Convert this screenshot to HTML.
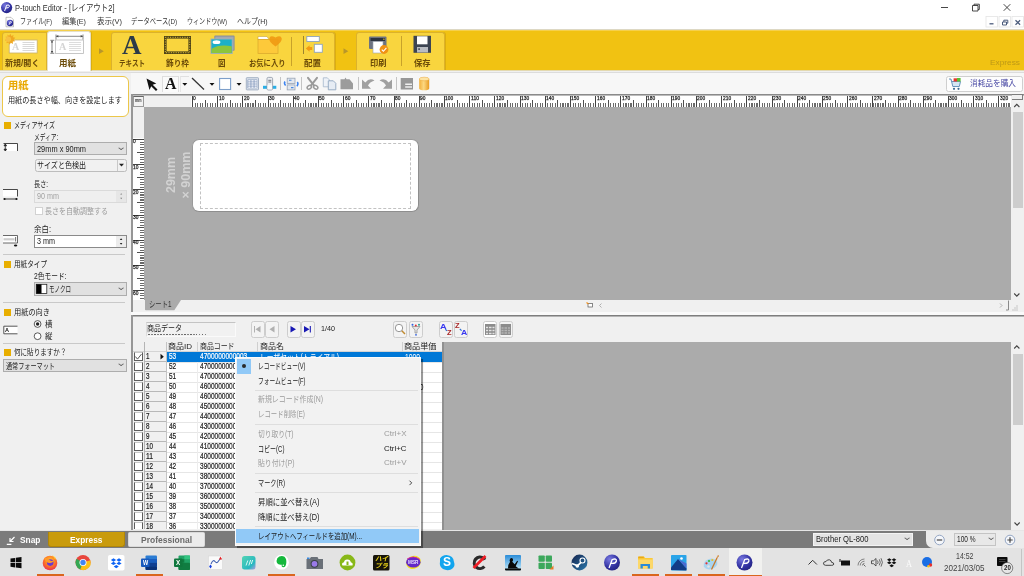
<!DOCTYPE html>
<html lang="ja"><head><meta charset="utf-8"><title>P-touch Editor - [レイアウト2]</title>
<style>
*{box-sizing:border-box;margin:0;padding:0}
html,body{width:1024px;height:576px;overflow:hidden;background:#f0f0f0}
body{position:relative;font-family:"Liberation Sans","Noto Sans CJK JP",sans-serif;font-size:8px;color:#222}
.a{position:absolute}
.t{position:absolute;white-space:nowrap;transform-origin:0 50%;display:block}
svg{position:absolute;overflow:visible}
.tl{position:absolute;left:0;top:0;width:1024px;height:576px;will-change:transform;pointer-events:none}
#title{left:0;top:0;width:1024px;height:29px;background:#fff}
#ribbon{left:0;top:29px;width:1024px;height:42px;background:linear-gradient(#f5d04c 0,#f5d04c 1px,#f1c212 1.500px);border-top:1px solid #ddd8c4;border-bottom:1px solid #e3d9b0}
.grp{position:absolute;top:32px;height:38px;background:#f9d53e;border:1px solid #dcb22c;border-bottom:none;border-radius:3px 3px 0 0;box-shadow:1px 0 0 rgba(170,130,10,.3)}
.rsep{position:absolute;width:1px;background:#c8a22a}
#tool{left:131px;top:72px;width:893px;height:22px;background:#f7f7f7;border-top:1px solid #dcdcdc}
.tsep{position:absolute;top:77px;width:1px;height:13px;background:#c4c4c4}
#left{left:0;top:71px;width:131px;height:459px;background:#f0f0f0}
.sq{position:absolute;left:4px;width:6.5px;height:7px;background:#e8ae00}
.combo{position:absolute;background:#e1e1e1;border:1px solid #adadad}
.hr{position:absolute;left:3px;width:122px;height:1px;background:#c9c9c9}
.chev{position:absolute;width:4.200px;height:4.200px;border-right:1px solid #606060;border-bottom:1px solid #606060;transform:scaleY(.72) rotate(45deg)}
#edit{left:131px;top:94px;width:893px;height:218px;background:linear-gradient(#8a8a8a 0,#8a8a8a 1px,#bcbcbc 1px,#bcbcbc 2px,#f0f0f0 2px);border-left:2px solid #969696}
#canvas{left:144px;top:107px;width:867px;height:192.5px;background:#ababab}
#hrul{left:144px;top:96px;width:867px;height:11px;background:#f0f0f0}
#vrul{left:133px;top:107px;width:11px;height:193px;background:#f0f0f0}
#label{left:192px;top:138.600px;width:227px;height:73px;background:#fff;border:1px solid #9a9a9a;border-right:1.600px solid #8e8e8e;border-bottom:1.800px solid #8e8e8e;border-radius:7px}
#label i{position:absolute;left:6.500px;top:3.100px;right:6.900px;bottom:2.100px;border:1px dashed #c2c2c2}
#db{left:131px;top:314.500px;width:893px;height:216px;background:linear-gradient(#b8b8b8 0,#b8b8b8 .5px,#7e7e7e .5px,#7e7e7e 1.500px,#b4b4b4 1.500px,#b4b4b4 2.500px,#f0f0f0 2.500px);border-left:2px solid #969696}
.btn{position:absolute;top:321px;width:14px;height:16.5px;background:#f3f3f3;border:1px solid #cdcdcd;border-radius:2.5px}
#grid{left:133px;top:342px;width:309px;height:187px;background:#fff;overflow:hidden}
#dbgrey{left:442px;top:342px;width:569px;height:187.5px;background:#ababab;border-left:2px solid #909090}
#status{left:0;top:529.5px;width:1024px;height:18.5px;background:#7b7b7b;border-top:1.5px solid #e6e6e6}
#task{left:0;top:548px;width:1024px;height:28px;background:#e3e3e3}
.ind{position:absolute;top:574px;height:2px;background:#d9661e}
#menu{left:235.5px;top:357px;width:186px;height:188.5px;background:#f2f2f2;border:1px solid #fbfbfb;box-shadow:1.700px 1.700px .6px rgba(0,0,0,.4)}
.msep{position:absolute;left:256px;width:163px;height:1px;background:#dedede}
</style></head><body>
<!-- ===== title + menu bar ===== -->
<div id="title" class="a"></div>
<svg width="1024" height="29" style="left:0;top:0" viewBox="0 0 1024 29">
  <defs><radialGradient id="pg" cx=".35" cy=".3" r=".8"><stop offset="0" stop-color="#7a7ae0"/><stop offset=".6" stop-color="#3434a4"/><stop offset="1" stop-color="#20207c"/></radialGradient></defs>
  <circle cx="6.6" cy="7.6" r="5.6" fill="url(#pg)"/>
  <path d="M4.6 11 L6.6 5.2 Q9.8 4.2 9.4 6.4 Q8.8 8.2 6 8" fill="none" stroke="#fff" stroke-width="1"/>
  <path d="M6 17.300h5l2.500 2.500v7h-7.500z" fill="#fff" stroke="#999" stroke-width=".6"/>
  <circle cx="10" cy="23" r="3.200" fill="url(#pg)"/>
  <path d="M9 25l1-3.300q1.800-.5 1.500.8q-.4.900-1.800.8" fill="none" stroke="#fff" stroke-width=".7"/>
  <!-- window controls -->
  <path d="M941 7.5h7" stroke="#333" stroke-width=".9"/>
  <path d="M972.5 5.5h5.5v5.5h-5.5z M974 5.5v-1.3h5.3v5.3h-1.3" fill="none" stroke="#333" stroke-width=".9"/>
  <path d="M1003.7 4.2l6.6 6.6M1010.3 4.2l-6.6 6.6" stroke="#333" stroke-width=".9"/>
  <!-- mdi controls -->
  <g fill="#fff" stroke="#e4e4e4" stroke-width=".8"><rect x="986" y="16.5" width="11.5" height="10.5"/><rect x="999" y="16.5" width="11.5" height="10.5"/><rect x="1012" y="16.5" width="11.5" height="10.5"/></g>
  <path d="M989.5 23.8h4" stroke="#4c5c7c" stroke-width="1.3"/>
  <path d="M1002.5 22h4v3h-4z M1003.8 22v-1.8h4v3h-1.3" fill="none" stroke="#4c5c7c" stroke-width="1"/>
  <path d="M1015.5 20.2l4.6 4.6M1020.1 20.2l-4.6 4.6" stroke="#4c5c7c" stroke-width="1.3"/>
</svg>

<!-- ===== ribbon ===== -->
<div id="ribbon" class="a"></div>
<div class="grp" style="left:2px;width:45px;border-radius:3px 0 0 0"></div>
<div class="grp" style="left:47px;width:43.5px;background:#fff;top:31px;height:39.5px;border-color:#e6e0c8"></div>
<div class="grp" style="left:111px;width:224px"></div>
<div class="grp" style="left:356px;width:88.5px"></div>
<div class="rsep" style="left:291px;top:37px;height:29px"></div>
<div class="rsep" style="left:302.5px;top:36px;height:18px;background:#9c8430;width:1.3px"></div>
<div class="rsep" style="left:400.5px;top:36px;height:30px"></div>
<svg width="1024" height="42" style="left:0;top:29px" viewBox="0 29 1024 42">
  <path d="M99 48.3l4.8 2.9l-4.8 2.9z M343.5 48.3l4.8 2.9l-4.8 2.9z" fill="#b8962a"/>
  <!-- new/open -->
  <rect x="9.200" y="40" width="28" height="13" fill="#fff" stroke="#c8b06a" stroke-width=".8"/>
  <path d="M22.500 42.500h12M22.500 44.500h12M22.500 46.500h12M22.500 48.500h12M22.500 50.500h12" stroke="#cfcfcf" stroke-width=".8"/>
  <g transform="translate(-3.200 -.7) scale(1.05)" style="transform-origin:11.500px 40px"><path d="M10.5 35.5l1.8 1.2l1.2-2l.9 2.1l2.1-.9l-.5 2.2l2.2.5l-1.6 1.6l1.4 1.7l-2.2.3l.1 2.3l-1.9-1.2l-1.4 1.8l-.8-2.1l-2.2.7l.7-2.1l-2.1-.8l1.8-1.4l-1.2-1.9l2.3.1z" fill="#f0a820"/>
  <circle cx="11.5" cy="40" r="2.6" fill="#f7c040"/></g>
  <!-- paper -->
  <rect x="55.5" y="40" width="28" height="13.5" fill="#fff" stroke="#b8b8b8" stroke-width=".8"/>
  <path d="M69 42.5h12M69 44.5h12M69 46.5h12M69 48.5h12M69 50.5h12" stroke="#d4d4d4" stroke-width=".8"/>
  <path d="M56 36.3h27M56 34.5v5M83 34.5v5M52 40.5v12.5M50.3 40.3h4M50.3 53.3h4" stroke="#555" stroke-width=".7" fill="none"/>
  <path d="M56.3 36.3l2-1.2v2.4z M82.7 36.3l-2-1.2v2.4z M52 40.5l-1.2 2h2.4z M52 53l-1.2-2h2.4z" fill="#444"/>
  <!-- picture -->
  <rect x="214.300" y="35.600" width="20.300" height="15.200" rx=".8" fill="#8b9099"/><rect x="215.300" y="36.600" width="18.300" height="13.200" fill="#a4a9b2"/>
  <rect x="211" y="39" width="21.200" height="14.500" fill="#1cb0c8" stroke="#a4b0b8" stroke-width=".9"/>
  <path d="M211.500 48.800q7.500-5 20.200-2.600v6.800h-20.200z" fill="#8cc53c"/><ellipse cx="216.500" cy="42.200" rx="3.900" ry="1.900" fill="#fff"/>
  <!-- favourites -->
  <path d="M258 39.5v-3h9l2 3z" fill="#fff" stroke="#c8a43a" stroke-width=".6"/>
  <rect x="258" y="39.5" width="20" height="14" fill="#fdc93a" stroke="#d8a62c" stroke-width=".7"/>
  <path d="M275.5 46.5q-7-5-6.2-8.3q1-3.6 6.200-.8q5.2-2.800 6.200.8q.8 3.300-6.200 8.300z" fill="#f09a14" opacity=".92"/>
  <!-- arrange -->
  <rect x="306.800" y="36.500" width="12.500" height="5" fill="#fff" stroke="#8ea4bc" stroke-width=".9"/>
  <rect x="314.300" y="44.300" width="8" height="8" fill="#fff" stroke="#8ea4bc" stroke-width=".9"/>
  <path d="M305.800 48.500l3.800-3.300v1.900h2.600v2.800h-2.600v1.900z" fill="#f29a14"/>
  <!-- print -->
  <rect x="369" y="36.500" width="17.500" height="12.500" rx="1" fill="#6c7280"/><rect x="370.500" y="38" width="14.500" height="3" fill="#2e3440"/><rect x="383.300" y="38.600" width="1.200" height="1.200" fill="#f0d020"/>
  <rect x="373" y="41.500" width="10" height="11.500" fill="#fff" stroke="#9aa2b0" stroke-width=".6"/>
  <circle cx="384" cy="49.500" r="4.400" fill="#f09214"/><path d="M381.800 49.600l1.600 1.700l3-3.500" fill="none" stroke="#fff" stroke-width="1.100"/>
  <!-- save -->
  <rect x="413.500" y="35.800" width="17.500" height="17" fill="#3c4452"/><rect x="417" y="36.300" width="10.500" height="8" fill="#fff"/>
  <rect x="417" y="47" width="11" height="5.500" fill="#b9bcc2"/><rect x="418.300" y="48.300" width="1.600" height="1.600" fill="#3c4452"/>
  <!-- text A -->
</svg>
<svg width="40" height="24" style="left:160px;top:33px" viewBox="160 33 40 24">
  <rect x="165.300" y="37.300" width="24.400" height="15.400" fill="none" stroke="#4e4418" stroke-width="2.600"/>
  <rect x="165.300" y="37.300" width="24.400" height="15.400" fill="none" stroke="#f9d53e" stroke-width=".9" stroke-dasharray="1 1.400"/>
</svg>

<!-- ===== left panel ===== -->
<div id="left" class="a"></div>
<div class="a" style="left:0;top:72px;width:131px;height:1px;background:#dedede"></div>
<div class="a" style="left:2px;top:76px;width:126.500px;height:40.500px;background:#fff;border:1.500px solid #ecc74a;border-radius:6px"></div>
<div class="sq" style="top:122px"></div>
<div class="sq" style="top:260.500px"></div>
<div class="sq" style="top:308.800px"></div>
<div class="sq" style="top:348.800px"></div>
<div class="hr" style="top:254px"></div>
<div class="hr" style="top:302px"></div>
<div class="hr" style="top:343.200px"></div>
<div class="combo" style="left:34px;top:142.200px;width:93px;height:13px"></div><div class="chev" style="left:119.300px;top:145.600px"></div>
<div class="combo" style="left:34.500px;top:158.500px;width:92.500px;height:13.500px;background:#f1f1f1;border-color:#bdbdbd;border-radius:2.500px"></div>
<div class="a" style="left:117px;top:160px;width:1px;height:10.500px;background:#c8c8c8"></div>
<div class="combo" style="left:34px;top:189.500px;width:93px;height:13.500px;background:#efefef;border-color:#dadada"></div>
<div class="a" style="left:116px;top:190.500px;width:10px;height:11.500px;background:#e6e6e6"></div>
<div class="a" style="left:35px;top:207px;width:7.500px;height:8px;background:#fff;border:1px solid #d2d2d2"></div>
<div class="combo" style="left:34px;top:234.500px;width:93px;height:13.500px;background:#fff;border-color:#8a8a8a"></div>
<div class="a" style="left:116px;top:235.500px;width:10px;height:11.500px;background:#ececec"></div>
<div class="combo" style="left:34px;top:282px;width:93px;height:14px"></div><div class="chev" style="left:119.300px;top:285.800px"></div>
<div class="combo" style="left:3px;top:359.200px;width:124px;height:13px"></div><div class="chev" style="left:119.300px;top:362.300px"></div>
<svg width="131" height="300" style="left:0;top:130px" viewBox="0 130 131 300">
  <path d="M119 163.800h5l-2.500 2.800z" fill="#222"/>
  <path d="M120.200 194.600l1-1.400l1 1.400z M120.200 197.800l1 1.400l1-1.400z" fill="#777"/>
  <path d="M119.800 240l1.300-1.800l1.300 1.800z M119.800 243l1.300 1.800l1.300-1.800z" fill="#222"/>
  <!-- media icon -->
  <path d="M6.500 143.500h11v7.500h-11z" fill="#fff"/><path d="M3.500 143.500h14v7.500" fill="none" stroke="#333" stroke-width=".9"/>
  <path d="M5.300 144.500v6M5.300 144l-1.300 1.800h2.600z M5.300 151l-1.300-1.800h2.600z" stroke="#222" stroke-width=".8" fill="#222"/>
  <!-- length icon -->
  <path d="M3 189.500h14.500v7h-14.500z" fill="#fff"/><path d="M3 189.500h14.500v7" fill="none" stroke="#333" stroke-width=".9"/>
  <path d="M4.500 199h12" stroke="#222" stroke-width=".9"/><circle cx="4.500" cy="199" r="1.100" fill="#111"/><circle cx="16.500" cy="199" r="1.100" fill="#111"/>
  <!-- margin icon -->
  <path d="M3 235.500h14.500v7.500h-14.500z" fill="#fff"/><path d="M3 235.500h14.500v7.500h-14.500" fill="none" stroke="#444" stroke-width=".8"/>
  <path d="M3.500 239.300h11" stroke="#ccc" stroke-width="2.200"/><path d="M15.600 237v4.500" stroke="#333" stroke-width=".7"/>
  <ellipse cx="15.600" cy="245.500" rx="1.700" ry="1" fill="#111"/>
  <!-- mono icon -->
  <rect x="36.300" y="284.300" width="10.500" height="9.300" fill="#fff" stroke="#222" stroke-width=".8"/><rect x="36.300" y="284.300" width="5.200" height="9.300" fill="#000"/>
  <!-- radios -->
  <circle cx="37.600" cy="324" r="3.400" fill="#fff" stroke="#333" stroke-width=".8"/><circle cx="37.600" cy="324" r="1.700" fill="#222"/>
  <circle cx="37.600" cy="336.200" r="3.400" fill="#fff" stroke="#333" stroke-width=".8"/>
  <!-- orientation icon -->
  <path d="M3.800 326.200h13.700v7.600h-13.700z" fill="#fff"/><path d="M17.500 326.200h-13.700v7.600h13.700" fill="none" stroke="#444" stroke-width=".9"/>
</svg>

<!-- ===== drawing toolbar ===== -->
<div id="tool" class="a"></div>
<div class="a" style="left:162px;top:76px;width:17px;height:15.500px;background:#fafafa;border:1px solid #dedede;border-bottom:none"></div>
<div class="a" style="left:180px;top:76px;width:9px;height:15.500px;border-top:1px solid #e0e0e0;border-left:1px solid #e6e6e6"></div>
<div class="tsep" style="left:279.500px"></div><div class="tsep" style="left:301px"></div><div class="tsep" style="left:357.500px"></div><div class="tsep" style="left:396px"></div>
<svg width="300" height="22" style="left:140px;top:72px" viewBox="140 72 300 22">
  <path d="M146.500 78.500l9.800 5l-3.600 1.300l4.800 4.700l-1.500 1.500l-4.800-4.800l-1.700 3.700z" fill="#111"/>
  <path d="M182.300 83h5l-2.500 2.800z M209.500 83h5l-2.500 2.800z M236.500 83h5l-2.500 2.800z" fill="#111"/>
  <path d="M192 78l12 11.500" stroke="#333" stroke-width="1.250"/>
  <rect x="219.600" y="78.500" width="11" height="11" fill="#fff" stroke="#7d9fca" stroke-width="1.100"/>
  <!-- table -->
  <rect x="246.300" y="77.700" width="12.200" height="12.200" rx=".6" fill="#dde3ec" stroke="#9caac0" stroke-width=".9"/>
  <rect x="247.600" y="79.600" width="9.600" height="8.600" fill="#748cb4"/>
  <g fill="#f4f6fa"><rect x="248.200" y="80.100" width="2.400" height="1.500"/><rect x="251.300" y="80.100" width="2.400" height="1.500"/><rect x="254.400" y="80.100" width="2.400" height="1.500"/>
  <rect x="248.200" y="82.200" width="2.400" height="1.500"/><rect x="251.300" y="82.200" width="2.400" height="1.500"/><rect x="254.400" y="82.200" width="2.400" height="1.500"/>
  <rect x="248.200" y="84.300" width="2.400" height="1.500"/><rect x="251.300" y="84.300" width="2.400" height="1.500"/><rect x="254.400" y="84.300" width="2.400" height="1.500"/>
  <rect x="248.200" y="86.400" width="2.400" height="1.500"/><rect x="251.300" y="86.400" width="2.400" height="1.500"/><rect x="254.400" y="86.400" width="2.400" height="1.500"/></g>
  <!-- label printer -->
  <rect x="263" y="85.800" width="13.300" height="3" fill="#2aaee6"/>
  <rect x="267" y="77.400" width="5.600" height="12.600" rx="1.300" fill="#eceef2" stroke="#8c95a4" stroke-width=".8"/><path d="M268.300 80.300h3M268.300 82h3" stroke="#70757e" stroke-width="1"/>
  <rect x="267.500" y="84.800" width="4.600" height="4.500" fill="#fafafa"/>
  <!-- arrange objects -->
  <rect x="287.200" y="78.200" width="7.800" height="5.200" fill="#e2e7ee" stroke="#98a3b4" stroke-width=".8"/><rect x="287.200" y="84.900" width="7.800" height="5" fill="#e2e7ee" stroke="#98a3b4" stroke-width=".8"/>
  <path d="M285 81.500q-1.300 2 .6 4 M297.300 82q1.500 2-.4 4.200" fill="none" stroke="#3a82f0" stroke-width="1.500"/>
  <path d="M289 80.300h2.500M291 87.600h2.500" stroke="#4a88e0" stroke-width="1.100"/>
  <!-- cut -->
  <path d="M308 77.800l6.300 8M317 77.800l-6.300 8" stroke="#9a9a9a" stroke-width="2" stroke-linecap="round"/>
  <ellipse cx="309.300" cy="87.300" rx="2.300" ry="1.700" fill="#f7f7f7" stroke="#9a9a9a" stroke-width="1.500" transform="rotate(-35 309.300 87.300)"/><ellipse cx="315.700" cy="87.300" rx="2.300" ry="1.700" fill="#f7f7f7" stroke="#9a9a9a" stroke-width="1.500" transform="rotate(35 315.700 87.300)"/>
  <!-- copy -->
  <path d="M323.300 77.800h4l2.200 2.200v6.800h-6.200z" fill="#eef2f8" stroke="#a4b6cc" stroke-width=".8"/><path d="M328.300 80.800h5l2.500 2.500v6.500h-7.500z" fill="#e6ecf4" stroke="#90a6c0" stroke-width=".9"/>
  <!-- paste -->
  <path d="M340.500 89.200v-10h4l1-1.700l1 1.700h3l3.500 4.300v5.700z" fill="#9c9c9c"/>
  <!-- undo redo -->
  <path d="M362 79.500V88.700H371L368 85.500Q369.500 82 374.500 80.500Q369.500 77.300 365.300 82.600Z" fill="#a0a0a0"/>
  <path d="M392 79.500V88.700H383L386 85.500Q384.500 82 379.500 80.500Q384.500 77.300 388.700 82.600Z" fill="#a0a0a0"/>
  <!-- properties -->
  <rect x="400.700" y="78" width="12.300" height="11.500" fill="#979797"/><path d="M405.200 84.300h6.800M405.200 87.100h6.800" stroke="#f0f0f0" stroke-width="1.500"/>
  <!-- database -->
  <defs><linearGradient id="cy" x1="0" x2="1"><stop offset="0" stop-color="#f2b03a"/><stop offset=".45" stop-color="#fcd882"/><stop offset="1" stop-color="#e89a20"/></linearGradient></defs>
  <path d="M419.200 79v9.500a5 1.800 0 0 0 10 0v-9.500z" fill="url(#cy)"/><ellipse cx="424.200" cy="79" rx="5" ry="1.800" fill="#fde4a4" stroke="#eaa530" stroke-width=".5"/>
</svg>
<!-- buy supplies button -->
<div class="a" style="left:945.500px;top:75.500px;width:77px;height:16px;background:#fdfdfd;border:1px solid #cfcfcf;border-radius:2.500px"></div>
<svg width="16" height="16" style="left:947px;top:76px" viewBox="947 76 16 16">
  <path d="M949 79h2l1.800 7.500h6.500l1.200-5h-8.800" fill="#d4e6f4" stroke="#5a8ab4" stroke-width=".9"/>
  <rect x="953.600" y="78.300" width="3.400" height="3.200" fill="#e8382c"/><rect x="957" y="78" width="3.600" height="3.500" fill="#5cc034"/>
  <circle cx="954" cy="88.800" r="1.100" fill="#3a6a94"/><circle cx="958.500" cy="88.800" r="1.100" fill="#3a6a94"/>
</svg>

<!-- ===== layout editor ===== -->
<div id="edit" class="a"></div>
<div id="hrul" class="a"><div class="a" style="left:47.200px;top:0;width:819.800px;height:11px;background:
 repeating-linear-gradient(90deg,#444 0 1px,transparent 1px 25.200px) .8px 0/100% 11px no-repeat,
 repeating-linear-gradient(90deg,#505050 0 1px,transparent 1px 12.600px) .8px 100%/100% 6.800px no-repeat,
 repeating-linear-gradient(90deg,#6a6a6a 0 1.100px,transparent 1.100px 2.520px) .8px 100%/100% 4.200px no-repeat,#fff"></div></div>
<div id="vrul" class="a"><div class="a" style="left:0;top:31.200px;width:11px;height:161.800px;background:
 repeating-linear-gradient(180deg,#444 0 1px,transparent 1px 25.200px) 0 .8px/11px 100% no-repeat,
 repeating-linear-gradient(180deg,#505050 0 1px,transparent 1px 12.600px) 100% .8px/6.800px 100% no-repeat,
 repeating-linear-gradient(180deg,#6a6a6a 0 1.100px,transparent 1.100px 2.520px) 100% .8px/4.200px 100% no-repeat,#fff"></div></div>
<div class="a" style="left:133px;top:96px;width:11px;height:11px;background:#f2f2f2;border:1px solid #9a9a9a;border-top-color:#666"></div>
<div id="canvas" class="a"></div>
<div id="label" class="a"><i></i></div>
<!-- sheet tab + scrollbars -->
<svg width="60" height="14" style="left:140px;top:298px" viewBox="140 298 60 14"><path d="M145 298v11.500q0 .8.800.8h28.500l8-12.300z" fill="#ababab"/></svg>
<div class="a" style="left:1011px;top:96px;width:11.500px;height:204px;background:#f0f0f0"></div>
<div class="a" style="left:1013px;top:112px;width:9.500px;height:96px;background:#cdcdcd"></div>
<div class="a" style="left:1011.500px;top:94px;width:11.500px;height:5.500px;border-top:1.500px solid #7d7d7d;border-right:1.300px solid #7d7d7d;border-bottom:1.200px solid #7d7d7d;background:#f0f0f0"></div>
<svg width="500" height="220" style="left:524px;top:94px" viewBox="524 94 500 220">
  <path d="M1014.200 107l2.600-2.600l2.600 2.600 M1014.200 293.500l2.600 2.600l2.600-2.600" fill="none" stroke="#444" stroke-width="1.100"/>
  <path d="M601.500 303.500l-2 2l2 2 M1000 303.500l2 2l-2 2" fill="none" stroke="#a8a8a8" stroke-width=".9"/>
  <rect x="588" y="303.500" width="4.500" height="3.500" fill="#fff" stroke="#555" stroke-width=".7"/><path d="M586.500 302.500l2 1.500" stroke="#f09020" stroke-width="1.200"/>
  <path d="M1008.500 300.500v9.500h-2.500" fill="none" stroke="#8a8a8a" stroke-width="1"/>
  <path d="M1013 310h.01M1015 310h.01M1017 310h.01M1015 308h.01M1017 308h.01M1017 306h.01" stroke="#b0b0b0" stroke-width="1.200" stroke-linecap="square"/>
</svg>

<!-- ===== database panel ===== -->
<div class="a" style="left:131px;top:312px;width:893px;height:2.500px;background:#fafafa"></div>
<div id="db" class="a"></div>
<div class="a" style="left:146px;top:322px;width:89.500px;height:14.500px;background:#f1f1f1;border:1px solid #fafafa;border-top:1.500px solid #c4c4c4;border-left-color:#dcdcdc;overflow:hidden">
  <div class="a" style="left:1px;top:10.800px;width:60px;height:1.600px;background:repeating-linear-gradient(90deg,#444 0 1.500px,transparent 1.500px 2.500px,#666 2.500px 4.500px,transparent 4.500px 6px);opacity:.8"></div>
</div>
<div class="btn" style="left:251px"></div><div class="btn" style="left:265px"></div><div class="btn" style="left:286.500px"></div><div class="btn" style="left:300.500px"></div>
<div class="btn" style="left:393px"></div><div class="btn" style="left:408.500px;width:14.500px"></div><div class="btn" style="left:438.500px"></div><div class="btn" style="left:453.500px"></div>
<div class="btn" style="left:483px;background:#fff"></div><div class="btn" style="left:498.500px;width:14.500px"></div>
<svg width="280" height="20" style="left:245px;top:319px" viewBox="245 319 280 20">
  <path d="M254.500 326v6.500" stroke="#b0b0b0" stroke-width="1"/><path d="M260.500 326v6.500l-5-3.250z M274.500 326v6.500l-5-3.250z" fill="#b0b0b0"/>
  <path d="M290.500 326v6.500l5.500-3.250z M304 326v6.500l5.500-3.250z" fill="#1818b4"/><path d="M310.300 326v6.500" stroke="#1818b4" stroke-width="1.100"/>
  <circle cx="399" cy="328" r="3.700" fill="#fff" stroke="#8a8a8a" stroke-width=".9"/><path d="M401.800 330.800l3.200 3.200" stroke="#c08a30" stroke-width="1.500"/>
  <path d="M412 326.500h8l-3 3.500v3h-2v-3z" fill="#e6e6e6" stroke="#8a8a8a" stroke-width=".7"/><circle cx="412.500" cy="324.800" r="1" fill="#3060e0"/><circle cx="415.800" cy="325.500" r="1" fill="#e03030"/><circle cx="419" cy="324.800" r="1" fill="#20a090"/><circle cx="416" cy="334.800" r=".9" fill="#3060e0"/>
  <path d="M445.300 329.300l1.800 1.600 M459.800 329l1.800 1.600" stroke="#3070d0" stroke-width="1.200"/>
  <rect x="485" y="324" width="10.500" height="11" fill="#8c8c8c"/><path d="M486 327.500h8.500M486 330.500h8.500M486 333.500h8.500" stroke="#e4e4e4" stroke-width="1.600"/><path d="M488.500 326v9M492 326v9" stroke="#8c8c8c" stroke-width=".9"/>
  <rect x="500.500" y="324" width="10.500" height="11" fill="#8c8c8c"/><path d="M501.500 328h8.500M501.500 330.500h8.500M501.500 333h8.500" stroke="#b4b4b4" stroke-width="1.300"/><path d="M504 326.500v8M507.500 326.500v8" stroke="#8c8c8c" stroke-width=".9"/>
</svg>
<div id="grid" class="a">
<div class="a" style="left:0;top:0;width:309px;height:10px;background:#f0f0f0;border-bottom:1px solid #d4d4d4"></div>
<div class="a" style="left:0;top:10px;width:33.500px;height:180px;background:#f0f0f0"></div>
<div class="a" style="left:33.500px;top:10px;width:275.500px;height:9.700px;background:#0078d7"></div>
<div class="a" style="left:33.500px;top:19.5px;width:275.500px;height:.8px;background:#e6e6e6"></div>
<div class="a" style="left:11px;top:19.3px;width:22.500px;height:.9px;background:#b8b8b8"></div>
<div class="a" style="left:33.500px;top:29.5px;width:275.500px;height:.8px;background:#e6e6e6"></div>
<div class="a" style="left:11px;top:29.3px;width:22.500px;height:.9px;background:#b8b8b8"></div>
<div class="a" style="left:33.500px;top:39.5px;width:275.500px;height:.8px;background:#e6e6e6"></div>
<div class="a" style="left:11px;top:39.3px;width:22.500px;height:.9px;background:#b8b8b8"></div>
<div class="a" style="left:33.500px;top:49.5px;width:275.500px;height:.8px;background:#e6e6e6"></div>
<div class="a" style="left:11px;top:49.3px;width:22.500px;height:.9px;background:#b8b8b8"></div>
<div class="a" style="left:33.500px;top:59.5px;width:275.500px;height:.8px;background:#e6e6e6"></div>
<div class="a" style="left:11px;top:59.3px;width:22.500px;height:.9px;background:#b8b8b8"></div>
<div class="a" style="left:33.500px;top:69.5px;width:275.500px;height:.8px;background:#e6e6e6"></div>
<div class="a" style="left:11px;top:69.3px;width:22.500px;height:.9px;background:#b8b8b8"></div>
<div class="a" style="left:33.500px;top:79.5px;width:275.500px;height:.8px;background:#e6e6e6"></div>
<div class="a" style="left:11px;top:79.3px;width:22.500px;height:.9px;background:#b8b8b8"></div>
<div class="a" style="left:33.500px;top:89.5px;width:275.500px;height:.8px;background:#e6e6e6"></div>
<div class="a" style="left:11px;top:89.3px;width:22.500px;height:.9px;background:#b8b8b8"></div>
<div class="a" style="left:33.500px;top:99.5px;width:275.500px;height:.8px;background:#e6e6e6"></div>
<div class="a" style="left:11px;top:99.3px;width:22.500px;height:.9px;background:#b8b8b8"></div>
<div class="a" style="left:33.500px;top:109.5px;width:275.500px;height:.8px;background:#e6e6e6"></div>
<div class="a" style="left:11px;top:109.3px;width:22.500px;height:.9px;background:#b8b8b8"></div>
<div class="a" style="left:33.500px;top:119.5px;width:275.500px;height:.8px;background:#e6e6e6"></div>
<div class="a" style="left:11px;top:119.3px;width:22.500px;height:.9px;background:#b8b8b8"></div>
<div class="a" style="left:33.500px;top:129.5px;width:275.500px;height:.8px;background:#e6e6e6"></div>
<div class="a" style="left:11px;top:129.3px;width:22.500px;height:.9px;background:#b8b8b8"></div>
<div class="a" style="left:33.500px;top:139.5px;width:275.500px;height:.8px;background:#e6e6e6"></div>
<div class="a" style="left:11px;top:139.3px;width:22.500px;height:.9px;background:#b8b8b8"></div>
<div class="a" style="left:33.500px;top:149.5px;width:275.500px;height:.8px;background:#e6e6e6"></div>
<div class="a" style="left:11px;top:149.3px;width:22.500px;height:.9px;background:#b8b8b8"></div>
<div class="a" style="left:33.500px;top:159.5px;width:275.500px;height:.8px;background:#e6e6e6"></div>
<div class="a" style="left:11px;top:159.3px;width:22.500px;height:.9px;background:#b8b8b8"></div>
<div class="a" style="left:33.500px;top:169.5px;width:275.500px;height:.8px;background:#e6e6e6"></div>
<div class="a" style="left:11px;top:169.3px;width:22.500px;height:.9px;background:#b8b8b8"></div>
<div class="a" style="left:33.500px;top:179.5px;width:275.500px;height:.8px;background:#e6e6e6"></div>
<div class="a" style="left:11px;top:179.3px;width:22.500px;height:.9px;background:#b8b8b8"></div>
<div class="a" style="left:33.500px;top:189.5px;width:275.500px;height:.8px;background:#e6e6e6"></div>
<div class="a" style="left:11px;top:189.3px;width:22.500px;height:.9px;background:#b8b8b8"></div>
<div class="a" style="left:10.5px;top:0;width:1px;height:190px;background:#b4b4b4"></div>
<div class="a" style="left:33.2px;top:0;width:1px;height:190px;background:#c4c4c4"></div>
<div class="a" style="left:63.5px;top:0;width:1px;height:10px;background:#cfcfcf"></div>
<div class="a" style="left:63.5px;top:20px;width:1px;height:170px;background:#ededed"></div>
<div class="a" style="left:124px;top:0;width:1px;height:10px;background:#cfcfcf"></div>
<div class="a" style="left:124px;top:20px;width:1px;height:170px;background:#ededed"></div>
<div class="a" style="left:268.5px;top:0;width:1px;height:10px;background:#cfcfcf"></div>
<div class="a" style="left:268.5px;top:20px;width:1px;height:170px;background:#ededed"></div>
<div class="a" style="left:1.300px;top:10.3px;width:8.400px;height:8.700px;background:#fff;border:1px solid #5c5c5c;border-top-color:#c8c8c8"></div>
<div class="a" style="left:1.300px;top:20.3px;width:8.400px;height:8.700px;background:#fff;border:1px solid #5c5c5c;border-top-color:#c8c8c8"></div>
<div class="a" style="left:1.300px;top:30.3px;width:8.400px;height:8.700px;background:#fff;border:1px solid #5c5c5c;border-top-color:#c8c8c8"></div>
<div class="a" style="left:1.300px;top:40.3px;width:8.400px;height:8.700px;background:#fff;border:1px solid #5c5c5c;border-top-color:#c8c8c8"></div>
<div class="a" style="left:1.300px;top:50.3px;width:8.400px;height:8.700px;background:#fff;border:1px solid #5c5c5c;border-top-color:#c8c8c8"></div>
<div class="a" style="left:1.300px;top:60.3px;width:8.400px;height:8.700px;background:#fff;border:1px solid #5c5c5c;border-top-color:#c8c8c8"></div>
<div class="a" style="left:1.300px;top:70.3px;width:8.400px;height:8.700px;background:#fff;border:1px solid #5c5c5c;border-top-color:#c8c8c8"></div>
<div class="a" style="left:1.300px;top:80.3px;width:8.400px;height:8.700px;background:#fff;border:1px solid #5c5c5c;border-top-color:#c8c8c8"></div>
<div class="a" style="left:1.300px;top:90.3px;width:8.400px;height:8.700px;background:#fff;border:1px solid #5c5c5c;border-top-color:#c8c8c8"></div>
<div class="a" style="left:1.300px;top:100.3px;width:8.400px;height:8.700px;background:#fff;border:1px solid #5c5c5c;border-top-color:#c8c8c8"></div>
<div class="a" style="left:1.300px;top:110.3px;width:8.400px;height:8.700px;background:#fff;border:1px solid #5c5c5c;border-top-color:#c8c8c8"></div>
<div class="a" style="left:1.300px;top:120.3px;width:8.400px;height:8.700px;background:#fff;border:1px solid #5c5c5c;border-top-color:#c8c8c8"></div>
<div class="a" style="left:1.300px;top:130.3px;width:8.400px;height:8.700px;background:#fff;border:1px solid #5c5c5c;border-top-color:#c8c8c8"></div>
<div class="a" style="left:1.300px;top:140.3px;width:8.400px;height:8.700px;background:#fff;border:1px solid #5c5c5c;border-top-color:#c8c8c8"></div>
<div class="a" style="left:1.300px;top:150.3px;width:8.400px;height:8.700px;background:#fff;border:1px solid #5c5c5c;border-top-color:#c8c8c8"></div>
<div class="a" style="left:1.300px;top:160.3px;width:8.400px;height:8.700px;background:#fff;border:1px solid #5c5c5c;border-top-color:#c8c8c8"></div>
<div class="a" style="left:1.300px;top:170.3px;width:8.400px;height:8.700px;background:#fff;border:1px solid #5c5c5c;border-top-color:#c8c8c8"></div>
<div class="a" style="left:1.300px;top:180.3px;width:8.400px;height:8.700px;background:#fff;border:1px solid #5c5c5c;border-top-color:#c8c8c8"></div>
</div>
<div id="dbgrey" class="a"></div>
<div class="a" style="left:1011px;top:342px;width:11.500px;height:187.500px;background:#f0f0f0"></div>
<div class="a" style="left:1013px;top:354px;width:9.500px;height:71px;background:#cdcdcd"></div>
<svg width="14" height="190" style="left:1010px;top:342px" viewBox="1010 342 14 190">
  <path d="M1014.200 348.500l2.600-2.600l2.600 2.600 M1014.500 522.500l2.600 2.600l2.600-2.600" fill="none" stroke="#444" stroke-width="1.100"/>
  <path d="M134.500 0" />
</svg>
<svg width="40" height="12" style="left:133px;top:352px" viewBox="133 352 40 12">
  <path d="M135.300 356.500l2.200 2.600l4-5" fill="none" stroke="#444" stroke-width=".9"/>
  <path d="M160.500 353.800l3.300 2.900l-3.300 2.900z" fill="#111"/>
</svg>

<!-- ===== status bar ===== -->
<div id="status" class="a"></div>
<div class="a" style="left:47.500px;top:531.500px;width:77px;height:15.500px;background:#c99b0c;border:1px solid #b08608;border-top:none;border-radius:0 0 3px 3px"></div>
<div class="a" style="left:128px;top:532px;width:76.500px;height:15px;background:#ececec;border:1px solid #dadada;border-radius:1.500px"></div>
<div class="a" style="left:813px;top:533px;width:99.500px;height:12.500px;background:#e4e4e4;border:1px solid #f4f4f4"></div><div class="chev" style="left:904.600px;top:535.800px"></div>
<div class="a" style="left:926px;top:530.500px;width:98px;height:17.500px;background:#ececec;border-radius:0 0 0 7px"></div>
<div class="a" style="left:953.500px;top:533px;width:42.500px;height:12.500px;background:#e8e8e8;border:1px solid #c4c4c4"></div><div class="chev" style="left:988.600px;top:535.800px"></div>
<svg width="1024" height="19" style="left:0;top:529.500px" viewBox="0 529.500 1024 19">
  <path d="M14.500 536.500l-4.500 4.500M10 537.500v3.500h3.500M6.800 543.800h4.600" fill="none" stroke="#fff" stroke-width="1.200"/>
  <circle cx="939.500" cy="539.500" r="4.800" fill="#f4f6fa" stroke="#94a6c4" stroke-width="1"/><path d="M936.800 539.500h5.400" stroke="#444" stroke-width="1.200"/>
  <circle cx="1010" cy="539.500" r="4.800" fill="#f4f6fa" stroke="#94a6c4" stroke-width="1"/><path d="M1007.300 539.500h5.400M1010 536.800v5.400" stroke="#444" stroke-width="1.200"/>
</svg>

<!-- ===== windows taskbar ===== -->
<div id="task" class="a"></div>
<div class="a" style="left:729px;top:548px;width:32.500px;height:28px;background:#f1f1ef"></div>
<div class="ind" style="left:37px;width:27px"></div><div class="ind" style="left:136px;width:27px"></div><div class="ind" style="left:268px;width:27px"></div>
<div class="ind" style="left:632px;width:27px"></div><div class="ind" style="left:665px;width:27px"></div><div class="ind" style="left:698px;width:27px"></div><div class="ind" style="left:729px;width:32.500px;top:574.500px"></div>
<div class="a" style="left:1021px;top:549px;width:1px;height:27px;background:#c4c4c4"></div>
<svg width="1024" height="28" style="left:0;top:548px" viewBox="0 548 1024 28">
  <defs>
    <radialGradient id="ff" cx=".5" cy=".35" r=".7"><stop offset="0" stop-color="#ffd43a"/><stop offset=".5" stop-color="#ff7a22"/><stop offset="1" stop-color="#e4265c"/></radialGradient>
    <linearGradient id="kd" x1="0" y1="0" x2="0" y2="1"><stop offset="0" stop-color="#2a8cd8"/><stop offset="1" stop-color="#c8ecfa"/></linearGradient>
    <linearGradient id="tl" x1="0" y1="0" x2="1" y2="1"><stop offset="0" stop-color="#52d4b4"/><stop offset=".7" stop-color="#28b8c0"/><stop offset="1" stop-color="#b49ae0"/></linearGradient>
    <linearGradient id="st" x1="0" y1="0" x2="1" y2="1"><stop offset="0" stop-color="#16254e"/><stop offset="1" stop-color="#2a78ac"/></linearGradient>
  </defs>
  <!-- start -->
  <path d="M10.500 558.600l4.700-.7v4.400h-4.700z M15.900 557.800l5.600-.8v5.300h-5.600z M10.500 563h4.700v4.400l-4.700-.7z M15.900 563h5.600v5.300l-5.600-.8z" fill="#0a0a0a"/>
  <!-- firefox -->
  <circle cx="50" cy="563" r="7.300" fill="url(#ff)"/><circle cx="50.200" cy="562.600" r="3.300" fill="#6a3ad0"/><path d="M44 558q3-1 5 1.500q2 2.500 5 .5q-1 3.500-5 3q-3.500-.5-5-5z" fill="#ff9a2a"/><path d="M52 555q3.500 1.500 4.500 5l-2-1.500z" fill="#ffd43a"/>
  <!-- chrome -->
  <circle cx="83" cy="562.500" r="7.500" fill="#e8453c"/><path d="M83 562.500l-6.500-3.700a7.500 7.500 0 0 0 3.800 10.700z" fill="#34a853"/><path d="M83 562.500l-2.700 7a7.500 7.500 0 0 0 10-9.300z" fill="#fbc116"/>
  <circle cx="83" cy="562.500" r="3.500" fill="#fff"/><circle cx="83" cy="562.500" r="2.700" fill="#4285f4"/>
  <!-- dropbox -->
  <rect x="108" y="555" width="16.500" height="15.500" rx="1.800" fill="#fff"/>
  <path d="M113.500 558.300l2.600 1.700l-2.600 1.700l-2.600-1.700z M119 558.300l2.600 1.700l-2.600 1.700l-2.600-1.700z M113.500 561.700l2.600 1.700l-2.600 1.700l-2.600-1.700z M119 561.700l2.600 1.700l-2.600 1.700l-2.600-1.700z M116.250 565l2.600 1.600l-2.600 1.700l-2.600-1.700z" fill="#0d63f5"/>
  <!-- word -->
  <rect x="145.500" y="555.500" width="11.500" height="14.500" rx="1" fill="#2b7cd3"/><rect x="145.500" y="559" width="11.500" height="3.700" fill="#1a5dbe"/><rect x="145.500" y="562.700" width="11.500" height="3.700" fill="#103f91"/><rect x="145.500" y="566.300" width="11.500" height="3.700" rx="1" fill="#0a3278"/>
  <rect x="141" y="558.500" width="8.500" height="8.500" rx="1" fill="#185abd"/>
  <!-- excel -->
  <rect x="178.500" y="555.500" width="11.500" height="14.500" rx="1" fill="#21a366"/><rect x="184.300" y="555.500" width="5.700" height="3.700" fill="#33c481"/><rect x="178.500" y="562.700" width="11.500" height="7.300" rx="1" fill="#107c41"/><rect x="178.500" y="559.200" width="5.800" height="3.500" fill="#107c41"/>
  <rect x="174" y="558.500" width="8.500" height="8.500" rx="1" fill="#0f773d"/>
  <!-- pdf tool -->
  <rect x="208.500" y="556" width="14" height="13.500" fill="#fafafa" stroke="#d4d4d4" stroke-width=".5"/>
  <path d="M211 564q2-5 4-2.500t3.500-.5l2.500-3" fill="none" stroke="#4060b0" stroke-width="1.100"/><path d="M220.500 556.500l1.600 3h-3.200z" fill="#e82020"/><path d="M210.500 564.500l1.400 2l-1.400 2l-1.400-2z" fill="#1840e0"/>
  <!-- teal app -->
  <rect x="242" y="556" width="13.500" height="13.500" rx="2.500" fill="url(#tl)"/><path d="M246 565.500l1.800-5M248.800 565.500l1.800-5.500M251.300 564l1.400-4" stroke="#e8fffa" stroke-width=".9"/>
  <!-- evernote -->
  <circle cx="281.500" cy="562.200" r="7.400" fill="#fff"/><path d="M277.300 558.200l2-1.800q3-1 5.200.3q2.200 2 1.800 6.300q-.5 4.200-3 4.300q-2.200-.2-1.500-2.600q-3.300.6-4.800-1.700q-.9-2.300.3-4.800z" fill="#14b83c"/><circle cx="283.300" cy="565.300" r=".8" fill="#fff"/>
  <!-- camera -->
  <path d="M306.500 559h3l1.500-2h6.500l1 2h4.500v10h-16.500z" fill="#6a7078"/><circle cx="314.500" cy="563.800" r="3.900" fill="#3a4048"/><circle cx="314.500" cy="563.800" r="2.900" fill="#9a7ae8"/><rect x="307" y="557.500" width="2.500" height="1.500" fill="#3a8ae0"/>
  <!-- green cloud -->
  <circle cx="347.500" cy="562.500" r="7.900" fill="#88b818"/><path d="M342.500 565.500q-1.500-2.500 1.500-3.300q.5-3 3.500-2.700q3 .2 3.300 2.800q2.500.5 1.700 3.200z" fill="#fff"/><rect x="346.500" y="561.500" width="2" height="3.500" fill="#88b818"/>
  <!-- hi-pla -->
  <rect x="373" y="555" width="16.500" height="15.500" rx="1.500" fill="#16130a"/>
  <!-- MSR -->
  <ellipse cx="413.500" cy="562.300" rx="7.600" ry="6.400" fill="#f4e020" transform="rotate(-25 413.500 562.300)"/><ellipse cx="413.300" cy="562.200" rx="7.200" ry="5.400" fill="#6428c8"/><path d="M407 559q6-4 13 .5" fill="none" stroke="#e020a0" stroke-width=".8"/>
  <!-- skype -->
  <path d="M440 558.500q2-3.500 6.500-3.500q7 .5 7.500 7q2 5-3 7.500q-4 1.500-8-.5q-4-2.500-3-7.500z" fill="#12a5ee"/>
  <!-- ccleaner-like -->
  <circle cx="480" cy="562.800" r="5.700" fill="none" stroke="#2a2a2a" stroke-width="3.200" stroke-dasharray="28 8" transform="rotate(40 480 562.800)"/><path d="M473.500 568l12-12" stroke="#ee1c24" stroke-width="2.600"/>
  <!-- kindle -->
  <rect x="505" y="555" width="16" height="15.500" rx="1" fill="url(#kd)"/><path d="M505 568.500h16v1a1 1 0 0 1-1 1h-14a1 1 0 0 1-1-1z" fill="#0a0a0a"/>
  <path d="M508 568.500q0-4.500 2-6.500q-1-2 .3-3.500q1.800-1.300 2.700.8q.3 1.500-.8 2.500l2.500 2.500l2.500-3.500l.8.500l-2.300 5l3 2.200z" fill="#0a0a0a"/>
  <!-- green grid -->
  <g fill="#3ca85c"><rect x="538.500" y="555.500" width="6.300" height="6.300" rx=".8"/><rect x="545.700" y="555.500" width="6.300" height="6.300" rx=".8"/><rect x="538.500" y="562.700" width="6.300" height="6.300" rx=".8"/><rect x="545.700" y="562.700" width="6.300" height="6.300" rx=".8"/></g>
  <path d="M553.500 565.500v4h-4z" fill="#e87a28"/>
  <!-- steam -->
  <circle cx="579.500" cy="562.500" r="7.900" fill="url(#st)"/><circle cx="582.500" cy="560.500" r="2.500" fill="none" stroke="#fff" stroke-width="1.100"/><path d="M572 563.500l5.500 2.300l3.500-3.500" fill="none" stroke="#fff" stroke-width="1.800"/><circle cx="577.300" cy="566" r="1.800" fill="#fff"/>
  <!-- p-touch x2 -->
  <circle cx="612" cy="562.500" r="8" fill="url(#pg)"/><path d="M609 568l3.200-8.500q4.600-1.500 4.200 1.500q-.8 2.800-5 2.400" fill="none" stroke="#fff" stroke-width="1.300"/>
  <circle cx="744.500" cy="562.500" r="8" fill="url(#pg)"/><path d="M741.500 568l3.200-8.500q4.600-1.500 4.200 1.500q-.8 2.800-5 2.400" fill="none" stroke="#fff" stroke-width="1.300"/>
  <!-- explorer -->
  <path d="M638 557.500q0-1 1-1h5l1.200 1.500h7.500v10.500h-14.700z" fill="#fbc936"/><rect x="638" y="559.500" width="14.700" height="9" fill="#fcd86a"/><path d="M640.500 568.500v-4.500h9.500v4.500h-2.300v-2.500h-4.900v2.500z" fill="#2a8ad8"/><rect x="638.300" y="556.600" width="5.500" height="1.500" fill="#e8a818"/>
  <!-- photos -->
  <rect x="671" y="555" width="15.500" height="15.500" rx=".8" fill="#2aa4e8"/><path d="M671 570v-2.500l7-8.500l8.500 9.500v2z" fill="#123c86"/><path d="M678 559l8.500 9.500v-5z" fill="#4a6ad0"/><circle cx="681.500" cy="558.500" r="1.300" fill="#fff"/>
  <!-- paint -->
  <ellipse cx="710.500" cy="564" rx="7" ry="5.200" fill="#a8d4f0" transform="rotate(-18 710.500 564)"/><circle cx="706.500" cy="563.300" r="1.100" fill="#e83030"/><circle cx="709" cy="561" r="1.100" fill="#38b838"/><circle cx="712.300" cy="560" r="1.100" fill="#f0c020"/><circle cx="708.500" cy="566.500" r="1.300" fill="#e3e3e3"/>
  <path d="M711.500 569.500l5.500-11.500" stroke="#c8782a" stroke-width="1.300"/><path d="M716.500 558.500l1.500-3.200l1 .8z" fill="#e8b878" stroke="#c8782a" stroke-width=".5"/>
  <!-- tray -->
  <path d="M808.500 564.500l4.200-4.200l4.200 4.200" fill="none" stroke="#333" stroke-width="1"/>
  <path d="M825.500 565.300q-2.300-.3-2-2.200q.5-1.800 2.500-1.500q1-2.300 3.500-1.800q2 .6 2 2.500q2.500.3 2.300 1.800q-.3 1.300-2 1.200z" fill="none" stroke="#333" stroke-width=".9"/>
  <rect x="841" y="560.500" width="9" height="5" fill="#111"/><path d="M840 559v3" stroke="#111" stroke-width="1"/>
  <path d="M858 565.500a6.500 6.500 0 0 1 6.500-6.500M860.200 565.500a4.300 4.300 0 0 1 4.300-4.300M862.400 565.500a2.100 2.100 0 0 1 2.100-2.100" fill="none" stroke="#6a6a6a" stroke-width=".8"/><path d="M863.500 564.500l2 2" stroke="#444" stroke-width=".8"/>
  <path d="M871.500 560.800h2l2.500-2.300v7.500l-2.500-2.300h-2z" fill="none" stroke="#333" stroke-width=".8"/><path d="M877.500 560.500q1.200 1.800 0 3.500M879.300 559.300q2 3 0 6M881 558.200q2.800 4.200 0 8.400" fill="none" stroke="#333" stroke-width=".7"/>
  <path d="M889.300 558.300l2.300 1.500l-2.300 1.500l-2.300-1.500z M894 558.300l2.300 1.500l-2.300 1.500l-2.300-1.500z M889.300 561.300l2.300 1.500l-2.300 1.500l-2.300-1.500z M894 561.300l2.300 1.500l-2.300 1.500l-2.300-1.500z M891.650 564.300l2.300 1.400l-2.300 1.500l-2.300-1.500z" fill="#111"/>
  <circle cx="927" cy="562" r="5" fill="#1a6ee4"/><circle cx="930.500" cy="565" r="1.700" fill="#e8302a"/><circle cx="928.500" cy="566.300" r="1.300" fill="#f8c020"/>
  <rect x="997" y="557" width="10.500" height="9" rx=".8" fill="#0a0a0a"/><path d="M999 559.500h6.500M999 561.500h6.500" stroke="#555" stroke-width=".7"/>
  <circle cx="1007.200" cy="568" r="5.600" fill="#e6e6e6" stroke="#444" stroke-width=".6"/>
</svg>

<!-- ===== context menu ===== -->
<div class="a" style="left:-.6px;top:0;z-index:5">
<div id="menu" class="a"></div>
<div class="a" style="left:237.500px;top:359px;width:14.500px;height:14.500px;background:#91c9f7"></div>
<div class="a" style="left:242.700px;top:364.200px;width:4.200px;height:4.200px;border-radius:50%;background:#2a2a2a"></div>
<div class="msep" style="top:390.300px"></div><div class="msep" style="top:424.300px"></div><div class="msep" style="top:473px"></div><div class="msep" style="top:492px"></div><div class="msep" style="top:526.300px"></div>
<div class="a" style="left:236.500px;top:529px;width:183px;height:14.300px;background:#91c9f7"></div>
<svg width="8" height="8" style="left:408px;top:479px" viewBox="408 479 8 8"><path d="M410.500 480.700l2.200 2.200l-2.200 2.200" fill="none" stroke="#333" stroke-width=".9"/></svg>
</div>

<!-- text labels -->
<div class="tl" style="z-index:1">
<span class="t" style='left:15px;top:4.05px;font-size:9.3px;line-height:9.3px;color:#2a2a2a;transform:scaleX(0.8024);'>P-touch Editor - [レイアウト2]</span>
<span class="t" style='left:20px;top:18.3px;font-size:8px;line-height:8px;color:#333;transform:scaleX(0.7580);'>ファイル(F)</span>
<span class="t" style='left:62px;top:18.3px;font-size:8px;line-height:8px;color:#333;transform:scaleX(0.8998);'>編集(E)</span>
<span class="t" style='left:96.5px;top:18.3px;font-size:8px;line-height:8px;color:#333;transform:scaleX(0.9373);'>表示(V)</span>
<span class="t" style='left:131px;top:18.3px;font-size:8px;line-height:8px;color:#333;transform:scaleX(0.7834);'>データベース(D)</span>
<span class="t" style='left:187px;top:18.3px;font-size:8px;line-height:8px;color:#333;transform:scaleX(0.7563);'>ウィンドウ(W)</span>
<span class="t" style='left:236.5px;top:18.3px;font-size:8px;line-height:8px;color:#333;transform:scaleX(0.8687);'>ヘルプ(H)</span>
<span class="t" style='left:4.5px;top:59.05px;font-size:8.5px;line-height:8.5px;color:#6b4b08;font-weight:bold;transform:scaleX(0.9485);'>新規/開く</span>
<span class="t" style='left:59px;top:59.05px;font-size:8.5px;line-height:8.5px;color:#6b4b08;font-weight:bold;transform:scaleX(0.9991);'>用紙</span>
<span class="t" style='left:119px;top:59.05px;font-size:8.5px;line-height:8.5px;color:#6b4b08;font-weight:bold;transform:scaleX(0.7704);'>テキスト</span>
<span class="t" style='left:166px;top:59.05px;font-size:8.5px;line-height:8.5px;color:#6b4b08;font-weight:bold;transform:scaleX(0.9014);'>飾り枠</span>
<span class="t" style='left:218px;top:59.05px;font-size:8.5px;line-height:8.5px;color:#6b4b08;font-weight:bold;transform:scaleX(0.8807);'>図</span>
<span class="t" style='left:249px;top:59.05px;font-size:8.5px;line-height:8.5px;color:#6b4b08;font-weight:bold;transform:scaleX(0.8585);'>お気に入り</span>
<span class="t" style='left:303.5px;top:59.05px;font-size:8.5px;line-height:8.5px;color:#6b4b08;font-weight:bold;transform:scaleX(0.9991);'>配置</span>
<span class="t" style='left:369.5px;top:59.05px;font-size:8.5px;line-height:8.5px;color:#6b4b08;font-weight:bold;transform:scaleX(0.9697);'>印刷</span>
<span class="t" style='left:414px;top:59.05px;font-size:8.5px;line-height:8.5px;color:#6b4b08;font-weight:bold;transform:scaleX(0.9697);'>保存</span>
<span class="t" style='left:990px;top:59.3px;font-size:8px;line-height:8px;color:#bd9816;transform:scaleX(1.0378);'>Express</span>
<span class="t" style='left:122px;top:32.3px;font-size:27px;line-height:27px;color:#2c3a48;font-weight:bold;font-family:"Liberation Serif","Noto Serif CJK SC",serif;transform:scaleX(1.0000);'>A</span>
<span class="t" style='left:12.3px;top:41.3px;font-size:11px;line-height:11px;color:#d4d4d4;font-weight:bold;font-family:"Liberation Serif","Noto Serif CJK SC",serif;transform:scaleX(0.9053);'>A</span>
<span class="t" style='left:59px;top:41.3px;font-size:11px;line-height:11px;color:#d4d4d4;font-weight:bold;font-family:"Liberation Serif","Noto Serif CJK SC",serif;transform:scaleX(0.9179);'>A</span>
<span class="t" style='left:165.3px;top:75.6px;font-size:16px;line-height:16px;color:#111;font-weight:bold;font-family:"Liberation Serif","Noto Serif CJK SC",serif;transform:scaleX(0.9946);'>A</span>
<span class="t" style='left:970px;top:79.05px;font-size:8.5px;line-height:8.5px;color:#4848a4;transform:scaleX(0.9017);'>消耗品を購入</span>
<span class="t" style='left:8px;top:80.05px;font-size:10.5px;line-height:10.5px;color:#e9a800;font-weight:bold;transform:scaleX(0.9762);'>用紙</span>
<span class="t" style='left:7.5px;top:95.75px;font-size:8.5px;line-height:8.5px;color:#222;transform:scaleX(0.8381);'>用紙の長さや幅、向きを設定します</span>
<span class="t" style='left:14px;top:121.05px;font-size:8.5px;line-height:8.5px;color:#222;transform:scaleX(0.6990);'>メディアサイズ</span>
<span class="t" style='left:34px;top:133.25px;font-size:8.5px;line-height:8.5px;color:#222;transform:scaleX(0.6707);'>メディア:</span>
<span class="t" style='left:37px;top:143.85px;font-size:9.5px;line-height:9.5px;color:#222;transform:scaleX(0.7799);'>29mm x 90mm</span>
<span class="t" style='left:37px;top:160.75px;font-size:8.5px;line-height:8.5px;color:#222;transform:scaleX(0.8270);'>サイズと色検出</span>
<span class="t" style='left:34px;top:180.05px;font-size:8.5px;line-height:8.5px;color:#222;transform:scaleX(0.7226);'>長さ:</span>
<span class="t" style='left:37px;top:191.05px;font-size:9.5px;line-height:9.5px;color:#a2a2a2;transform:scaleX(0.7574);'>90 mm</span>
<span class="t" style='left:45px;top:206.75px;font-size:8.5px;line-height:8.5px;color:#9c9c9c;transform:scaleX(0.8234);'>長さを自動調整する</span>
<span class="t" style='left:34px;top:225.25px;font-size:8.5px;line-height:8.5px;color:#222;transform:scaleX(0.8774);'>余白:</span>
<span class="t" style='left:37px;top:236.05px;font-size:9.5px;line-height:9.5px;color:#222;transform:scaleX(0.7579);'>3 mm</span>
<span class="t" style='left:14px;top:259.55px;font-size:8.5px;line-height:8.5px;color:#222;transform:scaleX(0.7762);'>用紙タイプ</span>
<span class="t" style='left:34px;top:272.05px;font-size:8.5px;line-height:8.5px;color:#222;transform:scaleX(0.7909);'>2色モード:</span>
<span class="t" style='left:49px;top:284.75px;font-size:8.5px;line-height:8.5px;color:#222;transform:scaleX(0.6468);'>モノクロ</span>
<span class="t" style='left:14px;top:308.05px;font-size:8.5px;line-height:8.5px;color:#222;transform:scaleX(0.8467);'>用紙の向き</span>
<span class="t" style='left:44.5px;top:320.05px;font-size:8.5px;line-height:8.5px;color:#222;transform:scaleX(0.8807);'>横</span>
<span class="t" style='left:44.5px;top:332.05px;font-size:8.5px;line-height:8.5px;color:#222;transform:scaleX(0.8807);'>縦</span>
<span class="t" style='left:5.3px;top:327.2px;font-size:6px;line-height:6px;color:#111;font-weight:bold;transform:scaleX(0.9209);'>A</span>
<span class="t" style='left:14px;top:347.95px;font-size:8.5px;line-height:8.5px;color:#222;transform:scaleX(0.7719);'>何に貼りますか？</span>
<span class="t" style='left:6px;top:361.75px;font-size:8.5px;line-height:8.5px;color:#222;transform:scaleX(0.7204);'>通常フォーマット</span>
<span class="t" style='left:135.2px;top:98.75px;font-size:4.5px;line-height:4.5px;color:#333;font-weight:bold;transform:scaleX(0.8234);'>mm</span>
<span class="t" style='left:149px;top:300.25px;font-size:8.5px;line-height:8.5px;color:#333;transform:scaleX(0.7442);'>シート1</span>
<span class="t" style='left:Nonepx;top:-6.25px;font-size:12.5px;line-height:12.5px;color:#d2d2d2;font-weight:bold;transform:scaleX(1.0000);left:171.2px;top:174.5px;transform:translate(-50%,-50%) rotate(-90deg);transform-origin:50% 50%;'>29mm</span>
<span class="t" style='left:Nonepx;top:-6.25px;font-size:12.5px;line-height:12.5px;color:#d2d2d2;font-weight:bold;transform:scaleX(1.0000);left:186px;top:174.5px;transform:translate(-50%,-50%) rotate(-90deg);transform-origin:50% 50%;'>× 90mm</span>
<span class="t" style='left:193.4px;top:96.35px;font-size:5.5px;line-height:5.5px;color:#222;transform:scaleX(0.8816);-webkit-text-stroke:.25px;'>0</span>
<span class="t" style='left:218.6px;top:96.35px;font-size:5.5px;line-height:5.5px;color:#222;transform:scaleX(0.8816);-webkit-text-stroke:.25px;'>10</span>
<span class="t" style='left:243.8px;top:96.35px;font-size:5.5px;line-height:5.5px;color:#222;transform:scaleX(0.8816);-webkit-text-stroke:.25px;'>20</span>
<span class="t" style='left:269.0px;top:96.35px;font-size:5.5px;line-height:5.5px;color:#222;transform:scaleX(0.8816);-webkit-text-stroke:.25px;'>30</span>
<span class="t" style='left:294.2px;top:96.35px;font-size:5.5px;line-height:5.5px;color:#222;transform:scaleX(0.8816);-webkit-text-stroke:.25px;'>40</span>
<span class="t" style='left:319.4px;top:96.35px;font-size:5.5px;line-height:5.5px;color:#222;transform:scaleX(0.8816);-webkit-text-stroke:.25px;'>50</span>
<span class="t" style='left:344.59999999999997px;top:96.35px;font-size:5.5px;line-height:5.5px;color:#222;transform:scaleX(0.8816);-webkit-text-stroke:.25px;'>60</span>
<span class="t" style='left:369.79999999999995px;top:96.35px;font-size:5.5px;line-height:5.5px;color:#222;transform:scaleX(0.8816);-webkit-text-stroke:.25px;'>70</span>
<span class="t" style='left:395.0px;top:96.35px;font-size:5.5px;line-height:5.5px;color:#222;transform:scaleX(0.8816);-webkit-text-stroke:.25px;'>80</span>
<span class="t" style='left:420.2px;top:96.35px;font-size:5.5px;line-height:5.5px;color:#222;transform:scaleX(0.8816);-webkit-text-stroke:.25px;'>90</span>
<span class="t" style='left:445.4px;top:96.35px;font-size:5.5px;line-height:5.5px;color:#222;transform:scaleX(0.8816);-webkit-text-stroke:.25px;'>100</span>
<span class="t" style='left:470.59999999999997px;top:96.35px;font-size:5.5px;line-height:5.5px;color:#222;transform:scaleX(0.9224);-webkit-text-stroke:.25px;'>110</span>
<span class="t" style='left:495.79999999999995px;top:96.35px;font-size:5.5px;line-height:5.5px;color:#222;transform:scaleX(0.8816);-webkit-text-stroke:.25px;'>120</span>
<span class="t" style='left:521.0px;top:96.35px;font-size:5.5px;line-height:5.5px;color:#222;transform:scaleX(0.8816);-webkit-text-stroke:.25px;'>130</span>
<span class="t" style='left:546.1999999999999px;top:96.35px;font-size:5.5px;line-height:5.5px;color:#222;transform:scaleX(0.8816);-webkit-text-stroke:.25px;'>140</span>
<span class="t" style='left:571.4px;top:96.35px;font-size:5.5px;line-height:5.5px;color:#222;transform:scaleX(0.8816);-webkit-text-stroke:.25px;'>150</span>
<span class="t" style='left:596.6px;top:96.35px;font-size:5.5px;line-height:5.5px;color:#222;transform:scaleX(0.8816);-webkit-text-stroke:.25px;'>160</span>
<span class="t" style='left:621.8px;top:96.35px;font-size:5.5px;line-height:5.5px;color:#222;transform:scaleX(0.8816);-webkit-text-stroke:.25px;'>170</span>
<span class="t" style='left:647.0px;top:96.35px;font-size:5.5px;line-height:5.5px;color:#222;transform:scaleX(0.8816);-webkit-text-stroke:.25px;'>180</span>
<span class="t" style='left:672.1999999999999px;top:96.35px;font-size:5.5px;line-height:5.5px;color:#222;transform:scaleX(0.8816);-webkit-text-stroke:.25px;'>190</span>
<span class="t" style='left:697.4px;top:96.35px;font-size:5.5px;line-height:5.5px;color:#222;transform:scaleX(0.8816);-webkit-text-stroke:.25px;'>200</span>
<span class="t" style='left:722.6px;top:96.35px;font-size:5.5px;line-height:5.5px;color:#222;transform:scaleX(0.8816);-webkit-text-stroke:.25px;'>210</span>
<span class="t" style='left:747.8px;top:96.35px;font-size:5.5px;line-height:5.5px;color:#222;transform:scaleX(0.8816);-webkit-text-stroke:.25px;'>220</span>
<span class="t" style='left:773.0px;top:96.35px;font-size:5.5px;line-height:5.5px;color:#222;transform:scaleX(0.8816);-webkit-text-stroke:.25px;'>230</span>
<span class="t" style='left:798.1999999999999px;top:96.35px;font-size:5.5px;line-height:5.5px;color:#222;transform:scaleX(0.8816);-webkit-text-stroke:.25px;'>240</span>
<span class="t" style='left:823.4px;top:96.35px;font-size:5.5px;line-height:5.5px;color:#222;transform:scaleX(0.8816);-webkit-text-stroke:.25px;'>250</span>
<span class="t" style='left:848.6px;top:96.35px;font-size:5.5px;line-height:5.5px;color:#222;transform:scaleX(0.8816);-webkit-text-stroke:.25px;'>260</span>
<span class="t" style='left:873.8px;top:96.35px;font-size:5.5px;line-height:5.5px;color:#222;transform:scaleX(0.8816);-webkit-text-stroke:.25px;'>270</span>
<span class="t" style='left:899.0px;top:96.35px;font-size:5.5px;line-height:5.5px;color:#222;transform:scaleX(0.8816);-webkit-text-stroke:.25px;'>280</span>
<span class="t" style='left:924.1999999999999px;top:96.35px;font-size:5.5px;line-height:5.5px;color:#222;transform:scaleX(0.8816);-webkit-text-stroke:.25px;'>290</span>
<span class="t" style='left:949.4px;top:96.35px;font-size:5.5px;line-height:5.5px;color:#222;transform:scaleX(0.8816);-webkit-text-stroke:.25px;'>300</span>
<span class="t" style='left:974.6px;top:96.35px;font-size:5.5px;line-height:5.5px;color:#222;transform:scaleX(0.8816);-webkit-text-stroke:.25px;'>310</span>
<span class="t" style='left:999.8px;top:96.35px;font-size:5.5px;line-height:5.5px;color:#222;transform:scaleX(0.8816);-webkit-text-stroke:.25px;'>320</span>
<span class="t" style='left:133.4px;top:139.45px;font-size:5.5px;line-height:5.5px;color:#222;transform:scaleX(0.8816);-webkit-text-stroke:.25px;'>0</span>
<span class="t" style='left:133.4px;top:164.65px;font-size:5.5px;line-height:5.5px;color:#222;transform:scaleX(0.8816);-webkit-text-stroke:.25px;'>10</span>
<span class="t" style='left:133.4px;top:189.85px;font-size:5.5px;line-height:5.5px;color:#222;transform:scaleX(0.8816);-webkit-text-stroke:.25px;'>20</span>
<span class="t" style='left:133.4px;top:215.05px;font-size:5.5px;line-height:5.5px;color:#222;transform:scaleX(0.8816);-webkit-text-stroke:.25px;'>30</span>
<span class="t" style='left:133.4px;top:240.25px;font-size:5.5px;line-height:5.5px;color:#222;transform:scaleX(0.8816);-webkit-text-stroke:.25px;'>40</span>
<span class="t" style='left:133.4px;top:265.45px;font-size:5.5px;line-height:5.5px;color:#222;transform:scaleX(0.8816);-webkit-text-stroke:.25px;'>50</span>
<span class="t" style='left:133.4px;top:290.65px;font-size:5.5px;line-height:5.5px;color:#222;transform:scaleX(0.8816);-webkit-text-stroke:.25px;'>60</span>
<span class="t" style='left:147px;top:324.05px;font-size:8.5px;line-height:8.5px;color:#222;transform:scaleX(0.8232);'>商品データ</span>
<span class="t" style='left:321px;top:325.45px;font-size:7.5px;line-height:7.5px;color:#222;transform:scaleX(0.9583);'>1/40</span>
<span class="t" style='left:439.8px;top:322.55px;font-size:7.5px;line-height:7.5px;color:#3838f0;font-weight:bold;transform:scaleX(1.2173);'>A</span>
<span class="t" style='left:447px;top:329.55px;font-size:6.5px;line-height:6.5px;color:#a82828;font-weight:bold;transform:scaleX(1.1545);'>Z</span>
<span class="t" style='left:454.6px;top:322.55px;font-size:6.5px;line-height:6.5px;color:#a82828;font-weight:bold;transform:scaleX(1.1545);'>Z</span>
<span class="t" style='left:460.5px;top:329.05px;font-size:7.5px;line-height:7.5px;color:#3838f0;font-weight:bold;transform:scaleX(1.1620);'>A</span>
<span class="t" style='left:168px;top:342.7px;font-size:8px;line-height:8px;color:#222;transform:scaleX(1.0000);'>商品ID</span>
<span class="t" style='left:199.5px;top:342.7px;font-size:8px;line-height:8px;color:#222;transform:scaleX(0.8625);'>商品コード</span>
<span class="t" style='left:260px;top:342.7px;font-size:8px;line-height:8px;color:#222;transform:scaleX(1.0000);'>商品名</span>
<span class="t" style='left:403.5px;top:342.7px;font-size:8px;line-height:8px;color:#222;transform:scaleX(1.0156);'>商品単価</span>
<span class="t" style='left:146.2px;top:351.4px;font-size:9.8px;line-height:9.8px;color:#1a1a1a;transform:scaleX(0.6418);-webkit-text-stroke:.22px;'>1</span>
<span class="t" style='left:169.3px;top:351.4px;font-size:9.8px;line-height:9.8px;color:#fff;transform:scaleX(0.6602);-webkit-text-stroke:.22px;'>53</span>
<span class="t" style='left:200.3px;top:351.4px;font-size:9.8px;line-height:9.8px;color:#fff;transform:scaleX(0.6663);-webkit-text-stroke:.22px;'>4700000000003</span>
<span class="t" style='left:146.2px;top:361.4px;font-size:9.8px;line-height:9.8px;color:#1a1a1a;transform:scaleX(0.6418);-webkit-text-stroke:.22px;'>2</span>
<span class="t" style='left:169.3px;top:361.4px;font-size:9.8px;line-height:9.8px;color:#1a1a1a;transform:scaleX(0.6602);-webkit-text-stroke:.22px;'>52</span>
<span class="t" style='left:200.3px;top:361.4px;font-size:9.8px;line-height:9.8px;color:#1a1a1a;transform:scaleX(0.6663);-webkit-text-stroke:.22px;'>4700000000002</span>
<span class="t" style='left:146.2px;top:371.4px;font-size:9.8px;line-height:9.8px;color:#1a1a1a;transform:scaleX(0.6418);-webkit-text-stroke:.22px;'>3</span>
<span class="t" style='left:169.3px;top:371.4px;font-size:9.8px;line-height:9.8px;color:#1a1a1a;transform:scaleX(0.6602);-webkit-text-stroke:.22px;'>51</span>
<span class="t" style='left:200.3px;top:371.4px;font-size:9.8px;line-height:9.8px;color:#1a1a1a;transform:scaleX(0.6663);-webkit-text-stroke:.22px;'>4700000000001</span>
<span class="t" style='left:146.2px;top:381.4px;font-size:9.8px;line-height:9.8px;color:#1a1a1a;transform:scaleX(0.6418);-webkit-text-stroke:.22px;'>4</span>
<span class="t" style='left:169.3px;top:381.4px;font-size:9.8px;line-height:9.8px;color:#1a1a1a;transform:scaleX(0.6602);-webkit-text-stroke:.22px;'>50</span>
<span class="t" style='left:200.3px;top:381.4px;font-size:9.8px;line-height:9.8px;color:#1a1a1a;transform:scaleX(0.6663);-webkit-text-stroke:.22px;'>4600000000003</span>
<span class="t" style='left:146.2px;top:391.4px;font-size:9.8px;line-height:9.8px;color:#1a1a1a;transform:scaleX(0.6418);-webkit-text-stroke:.22px;'>5</span>
<span class="t" style='left:169.3px;top:391.4px;font-size:9.8px;line-height:9.8px;color:#1a1a1a;transform:scaleX(0.6602);-webkit-text-stroke:.22px;'>49</span>
<span class="t" style='left:200.3px;top:391.4px;font-size:9.8px;line-height:9.8px;color:#1a1a1a;transform:scaleX(0.6663);-webkit-text-stroke:.22px;'>4600000000002</span>
<span class="t" style='left:146.2px;top:401.4px;font-size:9.8px;line-height:9.8px;color:#1a1a1a;transform:scaleX(0.6418);-webkit-text-stroke:.22px;'>6</span>
<span class="t" style='left:169.3px;top:401.4px;font-size:9.8px;line-height:9.8px;color:#1a1a1a;transform:scaleX(0.6602);-webkit-text-stroke:.22px;'>48</span>
<span class="t" style='left:200.3px;top:401.4px;font-size:9.8px;line-height:9.8px;color:#1a1a1a;transform:scaleX(0.6663);-webkit-text-stroke:.22px;'>4500000000001</span>
<span class="t" style='left:146.2px;top:411.4px;font-size:9.8px;line-height:9.8px;color:#1a1a1a;transform:scaleX(0.6418);-webkit-text-stroke:.22px;'>7</span>
<span class="t" style='left:169.3px;top:411.4px;font-size:9.8px;line-height:9.8px;color:#1a1a1a;transform:scaleX(0.6602);-webkit-text-stroke:.22px;'>47</span>
<span class="t" style='left:200.3px;top:411.4px;font-size:9.8px;line-height:9.8px;color:#1a1a1a;transform:scaleX(0.6663);-webkit-text-stroke:.22px;'>4400000000001</span>
<span class="t" style='left:146.2px;top:421.4px;font-size:9.8px;line-height:9.8px;color:#1a1a1a;transform:scaleX(0.6418);-webkit-text-stroke:.22px;'>8</span>
<span class="t" style='left:169.3px;top:421.4px;font-size:9.8px;line-height:9.8px;color:#1a1a1a;transform:scaleX(0.6602);-webkit-text-stroke:.22px;'>46</span>
<span class="t" style='left:200.3px;top:421.4px;font-size:9.8px;line-height:9.8px;color:#1a1a1a;transform:scaleX(0.6663);-webkit-text-stroke:.22px;'>4300000000001</span>
<span class="t" style='left:146.2px;top:431.4px;font-size:9.8px;line-height:9.8px;color:#1a1a1a;transform:scaleX(0.6418);-webkit-text-stroke:.22px;'>9</span>
<span class="t" style='left:169.3px;top:431.4px;font-size:9.8px;line-height:9.8px;color:#1a1a1a;transform:scaleX(0.6602);-webkit-text-stroke:.22px;'>45</span>
<span class="t" style='left:200.3px;top:431.4px;font-size:9.8px;line-height:9.8px;color:#1a1a1a;transform:scaleX(0.6663);-webkit-text-stroke:.22px;'>4200000000001</span>
<span class="t" style='left:146.2px;top:441.4px;font-size:9.8px;line-height:9.8px;color:#1a1a1a;transform:scaleX(0.6418);-webkit-text-stroke:.22px;'>10</span>
<span class="t" style='left:169.3px;top:441.4px;font-size:9.8px;line-height:9.8px;color:#1a1a1a;transform:scaleX(0.6602);-webkit-text-stroke:.22px;'>44</span>
<span class="t" style='left:200.3px;top:441.4px;font-size:9.8px;line-height:9.8px;color:#1a1a1a;transform:scaleX(0.6663);-webkit-text-stroke:.22px;'>4100000000001</span>
<span class="t" style='left:146.2px;top:451.4px;font-size:9.8px;line-height:9.8px;color:#1a1a1a;transform:scaleX(0.6882);-webkit-text-stroke:.22px;'>11</span>
<span class="t" style='left:169.3px;top:451.4px;font-size:9.8px;line-height:9.8px;color:#1a1a1a;transform:scaleX(0.6602);-webkit-text-stroke:.22px;'>43</span>
<span class="t" style='left:200.3px;top:451.4px;font-size:9.8px;line-height:9.8px;color:#1a1a1a;transform:scaleX(0.6663);-webkit-text-stroke:.22px;'>4000000000001</span>
<span class="t" style='left:146.2px;top:461.4px;font-size:9.8px;line-height:9.8px;color:#1a1a1a;transform:scaleX(0.6418);-webkit-text-stroke:.22px;'>12</span>
<span class="t" style='left:169.3px;top:461.4px;font-size:9.8px;line-height:9.8px;color:#1a1a1a;transform:scaleX(0.6602);-webkit-text-stroke:.22px;'>42</span>
<span class="t" style='left:200.3px;top:461.4px;font-size:9.8px;line-height:9.8px;color:#1a1a1a;transform:scaleX(0.6663);-webkit-text-stroke:.22px;'>3900000000001</span>
<span class="t" style='left:146.2px;top:471.4px;font-size:9.8px;line-height:9.8px;color:#1a1a1a;transform:scaleX(0.6418);-webkit-text-stroke:.22px;'>13</span>
<span class="t" style='left:169.3px;top:471.4px;font-size:9.8px;line-height:9.8px;color:#1a1a1a;transform:scaleX(0.6602);-webkit-text-stroke:.22px;'>41</span>
<span class="t" style='left:200.3px;top:471.4px;font-size:9.8px;line-height:9.8px;color:#1a1a1a;transform:scaleX(0.6663);-webkit-text-stroke:.22px;'>3800000000001</span>
<span class="t" style='left:146.2px;top:481.4px;font-size:9.8px;line-height:9.8px;color:#1a1a1a;transform:scaleX(0.6418);-webkit-text-stroke:.22px;'>14</span>
<span class="t" style='left:169.3px;top:481.4px;font-size:9.8px;line-height:9.8px;color:#1a1a1a;transform:scaleX(0.6602);-webkit-text-stroke:.22px;'>40</span>
<span class="t" style='left:200.3px;top:481.4px;font-size:9.8px;line-height:9.8px;color:#1a1a1a;transform:scaleX(0.6663);-webkit-text-stroke:.22px;'>3700000000001</span>
<span class="t" style='left:146.2px;top:491.4px;font-size:9.8px;line-height:9.8px;color:#1a1a1a;transform:scaleX(0.6418);-webkit-text-stroke:.22px;'>15</span>
<span class="t" style='left:169.3px;top:491.4px;font-size:9.8px;line-height:9.8px;color:#1a1a1a;transform:scaleX(0.6602);-webkit-text-stroke:.22px;'>39</span>
<span class="t" style='left:200.3px;top:491.4px;font-size:9.8px;line-height:9.8px;color:#1a1a1a;transform:scaleX(0.6663);-webkit-text-stroke:.22px;'>3600000000001</span>
<span class="t" style='left:146.2px;top:501.4px;font-size:9.8px;line-height:9.8px;color:#1a1a1a;transform:scaleX(0.6418);-webkit-text-stroke:.22px;'>16</span>
<span class="t" style='left:169.3px;top:501.4px;font-size:9.8px;line-height:9.8px;color:#1a1a1a;transform:scaleX(0.6602);-webkit-text-stroke:.22px;'>38</span>
<span class="t" style='left:200.3px;top:501.4px;font-size:9.8px;line-height:9.8px;color:#1a1a1a;transform:scaleX(0.6663);-webkit-text-stroke:.22px;'>3500000000001</span>
<span class="t" style='left:146.2px;top:511.4px;font-size:9.8px;line-height:9.8px;color:#1a1a1a;transform:scaleX(0.6418);-webkit-text-stroke:.22px;'>17</span>
<span class="t" style='left:169.3px;top:511.4px;font-size:9.8px;line-height:9.8px;color:#1a1a1a;transform:scaleX(0.6602);-webkit-text-stroke:.22px;'>37</span>
<span class="t" style='left:200.3px;top:511.4px;font-size:9.8px;line-height:9.8px;color:#1a1a1a;transform:scaleX(0.6663);-webkit-text-stroke:.22px;'>3400000000001</span>
<span class="t" style='left:146.2px;top:521.4px;font-size:9.8px;line-height:9.8px;color:#1a1a1a;transform:scaleX(0.6418);-webkit-text-stroke:.22px;'>18</span>
<span class="t" style='left:169.3px;top:521.4px;font-size:9.8px;line-height:9.8px;color:#1a1a1a;transform:scaleX(0.6602);-webkit-text-stroke:.22px;'>36</span>
<span class="t" style='left:200.3px;top:521.4px;font-size:9.8px;line-height:9.8px;color:#1a1a1a;transform:scaleX(0.6663);-webkit-text-stroke:.22px;'>3300000000001</span>
<span class="t" style='left:260px;top:352.75px;font-size:8.5px;line-height:8.5px;color:#fff;transform:scaleX(0.7986);'>レーザセット(トライアル)</span>
<span class="t" style='left:404.5px;top:351.9px;font-size:9.8px;line-height:9.8px;color:#fff;transform:scaleX(0.6882);'>1000</span>
<span class="t" style='left:404.5px;top:381.9px;font-size:9.8px;line-height:9.8px;color:#1a1a1a;transform:scaleX(0.6789);'>10000</span>
<span class="t" style='left:19.5px;top:535.45px;font-size:9.5px;line-height:9.5px;color:#fff;font-weight:bold;transform:scaleX(0.8823);'>Snap</span>
<span class="t" style='left:69.5px;top:535.45px;font-size:9.5px;line-height:9.5px;color:#fff;font-weight:bold;transform:scaleX(0.8787);'>Express</span>
<span class="t" style='left:140.5px;top:535.45px;font-size:9.5px;line-height:9.5px;color:#6a6a6a;font-weight:bold;transform:scaleX(0.8942);'>Professional</span>
<span class="t" style='left:815.5px;top:534.7px;font-size:9px;line-height:9px;color:#222;transform:scaleX(0.8461);'>Brother QL-800</span>
<span class="t" style='left:957px;top:534.7px;font-size:9px;line-height:9px;color:#222;transform:scaleX(0.7246);'>100 %</span>
<span class="t" style='left:955.5px;top:552.25px;font-size:8.7px;line-height:8.7px;color:#444;transform:scaleX(0.8046);'>14:52</span>
<span class="t" style='left:944px;top:564.45px;font-size:8.7px;line-height:8.7px;color:#444;transform:scaleX(0.9314);'>2021/03/05</span>
<span class="t" style='left:1003.8px;top:564.75px;font-size:6.5px;line-height:6.5px;color:#222;font-weight:bold;transform:scaleX(0.9400);'>20</span>
<span class="t" style='left:142.8px;top:559.55px;font-size:6.5px;line-height:6.5px;color:#fff;font-weight:bold;transform:scaleX(0.8468);'>W</span>
<span class="t" style='left:176.3px;top:559.55px;font-size:6.5px;line-height:6.5px;color:#fff;font-weight:bold;transform:scaleX(0.9669);'>X</span>
<span class="t" style='left:442.5px;top:556.3px;font-size:12px;line-height:12px;color:#fff;font-weight:bold;transform:scaleX(0.9981);'>S</span>
<span class="t" style='left:408.3px;top:559.55px;font-size:5.5px;line-height:5.5px;color:#e8e0ff;font-weight:bold;transform:scaleX(0.8501);'>MSR</span>
<span class="t" style='left:375px;top:555.75px;font-size:6.5px;line-height:6.5px;color:#f0d818;font-weight:bold;transform:scaleX(1.0097);font-style:italic;'>ハイ</span>
<span class="t" style='left:375px;top:562.75px;font-size:6.5px;line-height:6.5px;color:#f0d818;font-weight:bold;transform:scaleX(1.0000);font-style:italic;'>プラ</span>
<span class="t" style='left:905.5px;top:558.5px;font-size:10px;line-height:10px;color:#fbfbfb;font-family:"Liberation Serif","Noto Serif CJK SC",serif;transform:scaleX(0.8294);'>A</span>
</div>
<div class="tl" style="z-index:6">
<span class="t" style='left:257.9px;top:362.05px;font-size:8.5px;line-height:8.5px;color:#1a1a1a;transform:scaleX(0.6705);z-index:6;'>レコードビュー(V)</span>
<span class="t" style='left:257.9px;top:376.75px;font-size:8.5px;line-height:8.5px;color:#1a1a1a;transform:scaleX(0.6775);z-index:6;'>フォームビュー(F)</span>
<span class="t" style='left:257.9px;top:395.35px;font-size:8.5px;line-height:8.5px;color:#9b9b9b;transform:scaleX(0.8144);z-index:6;'>新規レコード作成(N)</span>
<span class="t" style='left:257.9px;top:410.05px;font-size:8.5px;line-height:8.5px;color:#9b9b9b;transform:scaleX(0.7539);z-index:6;'>レコード削除(E)</span>
<span class="t" style='left:257.9px;top:430.05px;font-size:8.5px;line-height:8.5px;color:#9b9b9b;transform:scaleX(0.7914);z-index:6;'>切り取り(T)</span>
<span class="t" style='left:384.4px;top:430.3px;font-size:8px;line-height:8px;color:#9b9b9b;transform:scaleX(1.0021);z-index:6;'>Ctrl+X</span>
<span class="t" style='left:257.9px;top:444.75px;font-size:8.5px;line-height:8.5px;color:#1a1a1a;transform:scaleX(0.7102);z-index:6;'>コピー(C)</span>
<span class="t" style='left:384.4px;top:445.0px;font-size:8px;line-height:8px;color:#1a1a1a;transform:scaleX(0.9829);z-index:6;'>Ctrl+C</span>
<span class="t" style='left:257.9px;top:459.05px;font-size:8.5px;line-height:8.5px;color:#9b9b9b;transform:scaleX(0.8050);z-index:6;'>貼り付け(P)</span>
<span class="t" style='left:384.4px;top:459.3px;font-size:8px;line-height:8px;color:#9b9b9b;transform:scaleX(1.0021);z-index:6;'>Ctrl+V</span>
<span class="t" style='left:257.9px;top:478.55px;font-size:8.5px;line-height:8.5px;color:#1a1a1a;transform:scaleX(0.7236);z-index:6;'>マーク(R)</span>
<span class="t" style='left:257.9px;top:497.55px;font-size:8.5px;line-height:8.5px;color:#1a1a1a;transform:scaleX(0.8681);z-index:6;'>昇順に並べ替え(A)</span>
<span class="t" style='left:257.9px;top:512.55px;font-size:8.5px;line-height:8.5px;color:#1a1a1a;transform:scaleX(0.8624);z-index:6;'>降順に並べ替え(D)</span>
<span class="t" style='left:257.9px;top:532.05px;font-size:8.5px;line-height:8.5px;color:#1a1a1a;transform:scaleX(0.7500);z-index:6;'>レイアウトへフィールドを追加(M)...</span>
</div>
</body></html>
